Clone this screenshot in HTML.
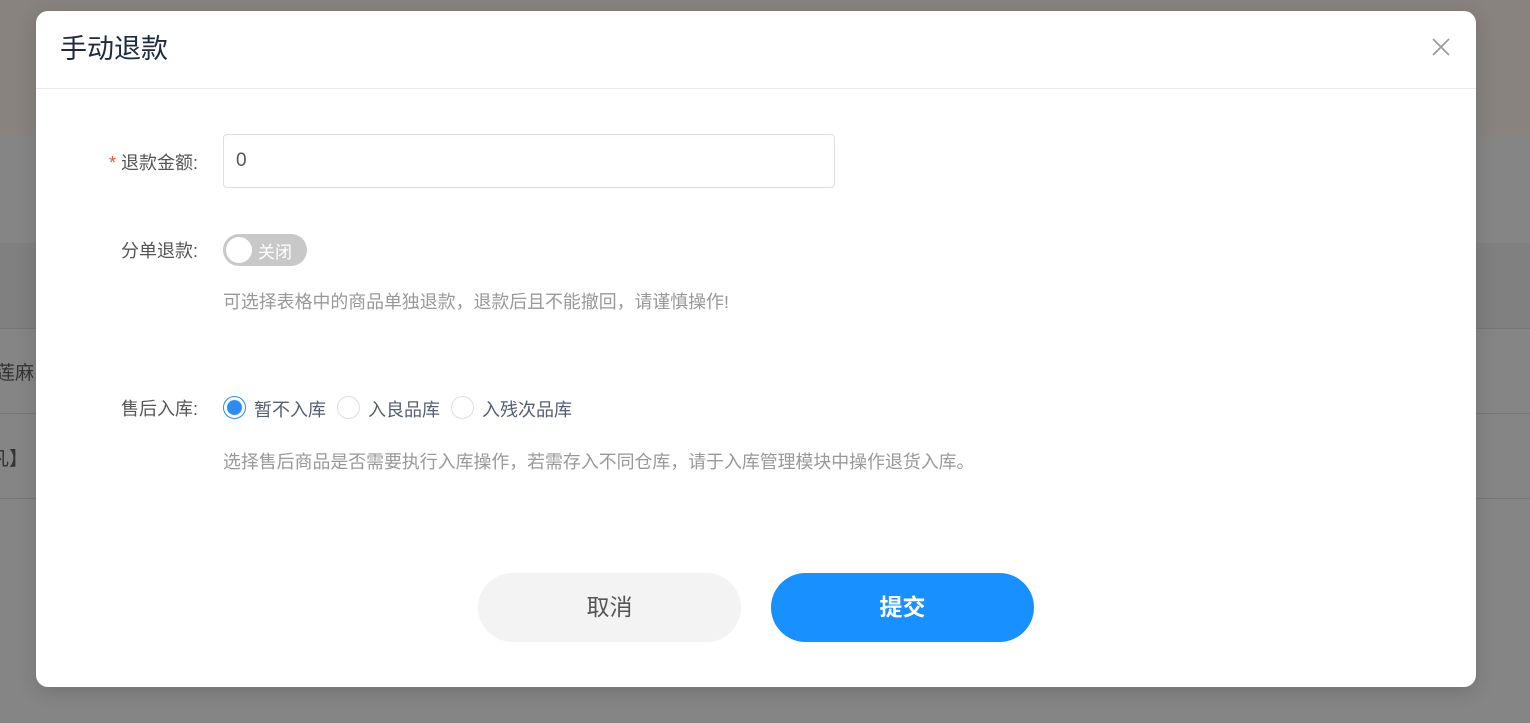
<!DOCTYPE html>
<html><head><meta charset="utf-8"><style>
*{margin:0;padding:0;box-sizing:border-box}
body{width:1530px;height:723px;overflow:hidden;background:#858585;font-family:"Liberation Sans","Noto Sans CJK SC",sans-serif;position:relative}
.band{position:absolute;left:0;right:0}
.modal{position:absolute;left:36px;top:11px;width:1440px;height:676px;background:#fff;border-radius:12px;box-shadow:0 4px 20px rgba(0,0,0,.15)}
.hd{height:78px;border-bottom:1px solid #e8e8e8;position:relative}
.title{position:absolute;left:24px;top:16px;font-size:27px;color:#1f2940}
.close{position:absolute;left:1396px;top:27px}
.lbl{position:absolute;font-size:18px;color:#555;text-align:right;width:162px;left:0}
.inp{position:absolute;left:187px;top:123px;width:612px;height:54px;border:1px solid #dcdfe6;border-radius:4px;font-size:19px;color:#555;padding:15px 12px}
.sw{position:absolute;left:187px;top:223px;width:84px;height:32px;border-radius:16px;background:#c8c8c8}
.sw .k{position:absolute;left:3px;top:3px;width:26px;height:26px;border-radius:50%;background:#fff}
.sw span{position:absolute;left:35px;top:4px;color:#fff;font-size:17px}
.tip{position:absolute;left:187px;font-size:17.9px;color:#999;white-space:nowrap}
.rad{position:absolute;top:385px;width:23px;height:23px;border-radius:50%;border:1px solid #dcdfe6}
.rt{position:absolute;top:385px;font-size:18px;color:#555f73}
.btn{position:absolute;top:562px;width:263px;height:69px;border-radius:35px;font-size:23px;text-align:center;line-height:69px}
</style></head><body>
<div class="band" style="top:0;height:135px;background:#88837f"></div>
<div class="band" style="top:243px;height:85px;background:#808080"></div>
<div class="band" style="top:328px;height:1px;background:#777"></div>
<div class="band" style="top:413px;height:1px;background:#777"></div>
<div class="band" style="top:498px;height:1px;background:#777"></div>
<div style="position:absolute;left:-4px;top:358px;font-size:19px;color:#333">莲麻</div>
<div style="position:absolute;left:-10px;top:444px;font-size:19px;color:#333">凡】</div>
<div class="modal">
<div class="hd"><div class="title">手动退款</div>
<svg class="close" width="18" height="18" viewBox="0 0 18 18"><path d="M1 1L17 17M17 1L1 17" stroke="#999" stroke-width="1.6"/></svg></div>
<div class="lbl" style="top:138px"><span style="color:#f5522d">*</span> 退款金额:</div>
<div class="inp">0</div>
<div class="lbl" style="top:226px">分单退款:</div>
<div class="sw"><div class="k"></div><span>关闭</span></div>
<div class="tip" style="top:277px">可选择表格中的商品单独退款，退款后且不能撤回，请谨慎操作!</div>
<div class="lbl" style="top:384px">售后入库:</div>
<div class="rad" style="left:187px;border-color:#2d8cf0;background:radial-gradient(circle,#2d8cf0 7px,#fff 8px)"></div>
<div class="rt" style="left:218px">暂不入库</div>
<div class="rad" style="left:301px"></div>
<div class="rt" style="left:332px">入良品库</div>
<div class="rad" style="left:415px"></div>
<div class="rt" style="left:446px">入残次品库</div>
<div class="tip" style="top:437px">选择售后商品是否需要执行入库操作，若需存入不同仓库，请于入库管理模块中操作退货入库。</div>
<div class="btn" style="left:442px;background:#f3f3f3;color:#555">取消</div>
<div class="btn" style="left:735px;background:#1890ff;color:#fff;font-weight:bold">提交</div>
</div>
</body></html>
